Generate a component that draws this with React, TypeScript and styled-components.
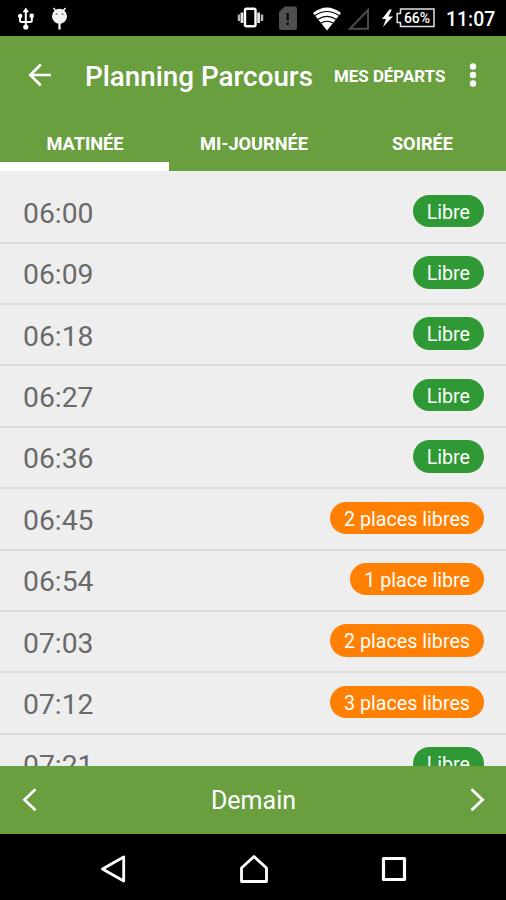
import React from 'react';
import styled, { createGlobalStyle } from 'styled-components';

const GlobalStyle = createGlobalStyle`
  * { box-sizing: border-box; }
  body { margin: 0; background: #000; }
`;

const Screen = styled.div`
  width: 506px;
  height: 900px;
  display: flex;
  flex-direction: column;
  overflow: hidden;
  background: #eee;
  font-family: Roboto, 'Liberation Sans', sans-serif;
  color: #fff;
  white-space: nowrap;
`;

const StatusBar = styled.div`
  flex: none;
  height: 35.6px;
  background: #000;
  display: flex;
  align-items: flex-start;
`;

const StatusIcons = styled.svg`
  display: block;
  flex: none;
  width: 396px;
  height: 35px;
`;

const Battery = styled.div`
  position: relative;
  flex: none;
  width: 39px;
  height: 20px;
  margin-top: 8px;
  padding-left: 3px;
  display: flex;
  align-items: center;
  justify-content: center;
  font-size: 14px;
  font-weight: 500;
  line-height: 20px;
`;

const BatteryOutline = styled.svg`
  position: absolute;
  inset: 0;
  width: 39px;
  height: 20px;
`;

const Clock = styled.div`
  margin-left: 11px;
  font-size: 19.4px;
  font-weight: 500;
  line-height: 39px;
`;

const Header = styled.header`
  flex: none;
  height: 135px;
  background: #6a9f3f;
  display: flex;
  flex-direction: column;
`;

const Toolbar = styled.div`
  height: 79px;
  display: flex;
  align-items: center;
  padding: 0 0 0 28px;
`;

const Title = styled.h1`
  flex: none;
  width: 282px;
  margin: 0;
  padding: 4px 0 0 33px;
  font-size: 27.8px;
  line-height: 36px;
  font-weight: 500;
`;

const Action = styled.div`
  flex: none;
  width: 132px;
  padding-top: 1px;
  font-size: 16.9px;
  font-weight: 700;
`;

const Icon = styled.svg<{ $w: number; $h: number }>`
  display: block;
  flex: none;
  width: ${p => p.$w}px;
  height: ${p => p.$h}px;
  fill: none;
  stroke: #fff;
`;

const Tabs = styled.nav`
  flex: 1;
  display: grid;
  grid-template-columns: 169px 169px 168px;
`;

const Tab = styled.div<{ $active?: boolean }>`
  padding: 17.4px 0 0 1px;
  text-align: center;
  font-size: 18.2px;
  line-height: 24px;
  font-weight: 700;
  border-bottom: 9px solid ${p => (p.$active ? '#fff' : 'transparent')};
`;

const List = styled.main`
  flex: 1;
  min-height: 0;
  overflow: hidden;
  padding-top: 11.6px;
`;

const Row = styled.div`
  height: 61.4px;
  border-bottom: 2px solid #dcdcdc;
  display: flex;
  align-items: center;
  justify-content: space-between;
  padding: 0 22px 0 23px;
`;

const Time = styled.span`
  padding-top: 4px;
  color: #6a6a6a;
  font-size: 28.3px;
  line-height: 34px;
`;

const Pill = styled.span<{ $partial: boolean }>`
  height: 32.5px;
  margin-bottom: 2px;
  padding: 1px 14px 0;
  border-radius: 17px;
  background: ${p => (p.$partial ? '#ff8002' : '#2e9935')};
  font-size: 19.7px;
  line-height: 33.6px;
`;

const DayBar = styled.footer`
  flex: none;
  height: 68px;
  padding: 0 21px;
  background: #6a9f3f;
  display: flex;
  align-items: center;
  justify-content: space-between;
`;

const DayName = styled.div`
  padding: 1px 0 0 1px;
  font-size: 25px;
`;

const NavBar = styled.div`
  flex: none;
  height: 66.5px;
  padding: 5px 98px 0 99px;
  background: #000;
  display: flex;
  align-items: center;
  justify-content: space-between;
`;

const slots: [string, number][] = [
  ['06:00', 0], ['06:09', 0], ['06:18', 0], ['06:27', 0], ['06:36', 0],
  ['06:45', 2], ['06:54', 1], ['07:03', 2], ['07:12', 3], ['07:21', 0],
];

const label = (n: number) => (n === 0 ? 'Libre' : n === 1 ? '1 place libre' : `${n} places libres`);

const StatusGlyphs = () => (
  <StatusIcons viewBox="0 0 396 35" fill="none" stroke="#fff">
    {/* usb */}
    <path d="M25.800 10v17M20 16v4.500q0 1.500 1.500 1.500h8.800q1.500 0 1.500-1.500V16" strokeWidth="2" />
    <path d="M25.800 7.500l3.200 4.800h-6.400z" fill="#fff" stroke="none" />
    <circle cx="25.800" cy="27" r="2.600" fill="#fff" stroke="none" />
    <circle cx="20.200" cy="16" r="2.200" fill="#fff" stroke="none" />
    <path d="M29.700 13.700h4v4h-4z" fill="#fff" stroke="none" />
    {/* debug head */}
    <path d="M53.500 8l3 3.500M65.500 8l-3 3.500" strokeWidth="1.400" />
    <circle cx="59.500" cy="16.200" r="7.500" fill="#f4f4f4" stroke="none" />
    <path d="M59.500 23v6.500" strokeWidth="2.200" />
    <circle cx="56.500" cy="14" r="1.100" fill="#888" stroke="none" />
    <circle cx="62.500" cy="14" r="1.100" fill="#888" stroke="none" />
    {/* vibrate */}
    <rect x="245" y="8.800" width="10.500" height="17.500" rx="1.500" strokeWidth="2.400" />
    <path d="M242 12.500v10.500M258.600 12.500v10.500" stroke="#e4e4e4" strokeWidth="2.800" />
    <path d="M239 14.500v6.500M262 14.500v6.500" stroke="#bbb" strokeWidth="2.400" />
    {/* missing sim */}
    <path d="M284.500 6.500h10.500q2 0 2 2v19.500q0 2-2 2h-14q-2 0-2-2V12z" fill="#505050" stroke="none" />
    <path d="M287.700 13v7.500M287.700 22.500v2.500" stroke="#080808" strokeWidth="2.200" />
    {/* wifi */}
    <path d="M313 13Q327 2 341 13L327 30.500z" fill="#fff" stroke="none" />
    <path d="M315 15.500Q327 7.500 339 15.500M318 19.300Q327 13.500 336 19.300M321 23Q327 19.500 333 23" stroke="#000" strokeWidth="1.100" />
    {/* mobile signal */}
    <path d="M350 28.700L368 10v18.700z" stroke="#4c4c4c" strokeWidth="2" />
    {/* charging */}
    <path d="M389.500 9.500l-7.500 9.500h4l-3 8 10-10.500h-4.600l3.400-7z" fill="#fff" stroke="none" />
  </StatusIcons>
);

export default function App() {
  return (
    <>
      <GlobalStyle />
      <Screen>
        <StatusBar>
          <StatusGlyphs />
          <Battery>
            <BatteryOutline viewBox="0 0 39 20" fill="none" stroke="#e2e2e2" strokeWidth="1.500">
              <path d="M4.500 1H38v17.500H4.500v-4H1.200v-9h3.300z" />
            </BatteryOutline>
            66%
          </Battery>
          <Clock>11:07</Clock>
        </StatusBar>
        <Header>
          <Toolbar>
            <Icon $w={24} $h={24} viewBox="0 0 24 24" strokeWidth="2.700">
              <path d="M23 12H3M12.800 1.500L2.300 12l10.500 10.500" />
            </Icon>
            <Title>Planning Parcours</Title>
            <Action>MES DÉPARTS</Action>
            <Icon $w={24} $h={24} viewBox="0 0 24 24">
              <g fill="#fff" stroke="none">
                <circle cx="7" cy="3.500" r="3.200" />
                <circle cx="7" cy="12" r="3.200" />
                <circle cx="7" cy="20.500" r="3.200" />
              </g>
            </Icon>
          </Toolbar>
          <Tabs>
            <Tab $active>MATINÉE</Tab>
            <Tab>MI-JOURNÉE</Tab>
            <Tab>SOIRÉE</Tab>
          </Tabs>
        </Header>
        <List>
          {slots.map(([time, places]) => (
            <Row key={time}>
              <Time>{time}</Time>
              <Pill $partial={places > 0}>{label(places)}</Pill>
            </Row>
          ))}
        </List>
        <DayBar>
          <Icon $w={16} $h={24} viewBox="0 0 16 24" strokeWidth="2.800">
            <path d="M14.500 1.200L3.500 11.700l11 10.500" />
          </Icon>
          <DayName>Demain</DayName>
          <Icon $w={16} $h={24} viewBox="0 0 16 24" strokeWidth="2.800">
            <path d="M2.500 1.200L13.500 11.700l-11 10.500" />
          </Icon>
        </DayBar>
        <NavBar>
          <Icon $w={28} $h={30} viewBox="0 0 28 30" strokeWidth="2.800" strokeLinejoin="round">
            <path d="M24.700 3v24L3.500 15z" />
          </Icon>
          <Icon $w={30} $h={30} viewBox="0 0 30 30" strokeWidth="2.800" strokeLinejoin="round">
            <path d="M2.500 27.500V14L15 2.500 27.500 14v13.500z" />
          </Icon>
          <Icon $w={28} $h={28} viewBox="0 0 28 28" strokeWidth="3.200" strokeLinejoin="round">
            <path d="M3.500 3.500h21v21h-21z" />
          </Icon>
        </NavBar>
      </Screen>
    </>
  );
}
